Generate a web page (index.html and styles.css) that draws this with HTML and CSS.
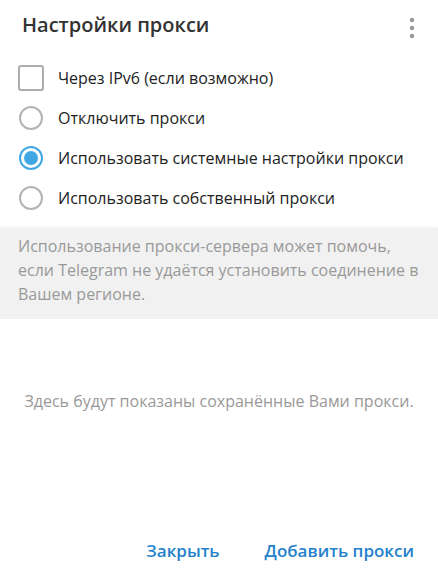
FILE: index.html
```html
<!DOCTYPE html>
<html lang="ru">
<head>
<meta charset="utf-8">
<link rel="stylesheet" href="styles.css">
</head>
<body>
<div class="box">
  <div class="header">
    <div class="title">Настройки прокси</div>
    <div class="menu">
      <svg width="6" height="22" viewBox="0 0 6 22"><circle cx="3" cy="3" r="2.3" fill="#999"/><circle cx="3" cy="11" r="2.3" fill="#999"/><circle cx="3" cy="19" r="2.3" fill="#999"/></svg>
    </div>
  </div>
  <div class="options">
    <div class="row"><span class="check"></span><span class="label">Через IPv6 (если возможно)</span></div>
    <div class="row"><span class="radio"></span><span class="label">Отключить прокси</span></div>
    <div class="row"><span class="radio on"></span><span class="label">Использовать системные настройки прокси</span></div>
    <div class="row"><span class="radio"></span><span class="label">Использовать собственный прокси</span></div>
  </div>
  <div class="about">Использование прокси-сервера может помочь, если Telegram не удаётся установить соединение в Вашем регионе.</div>
  <div class="empty">Здесь будут показаны сохранённые Вами прокси.</div>
  <div class="buttons">
    <span class="btn">Закрыть</span>
    <span class="btn">Добавить прокси</span>
  </div>
</div>
</body>
</html>
```
FILE: styles.css
```css
html, body {
  margin: 0;
  padding: 0;
  background: #fff;
}
body {
  font-family: "Open Sans", "Noto Sans", sans-serif;
  color: #333;
}
.box {
  width: 438px;
  height: 571px;
  display: flex;
  flex-direction: column;
}
.header {
  height: 58px;
  display: flex;
  justify-content: space-between;
  align-items: flex-start;
  padding: 0 23px 0 22px;
}
.title {
  font-size: 20px;
  font-weight: 600;
  line-height: 26px;
  margin-top: 12px;
  color: #333;
}
.menu {
  margin-top: 17px;
  line-height: 0;
}
.options {
  display: flex;
  flex-direction: column;
}
.row {
  height: 40px;
  display: flex;
  align-items: center;
  padding-left: 18px;
}
.label {
  font-size: 16px;
  margin-left: 14px;
  color: #222;
}
.check {
  width: 22px;
  height: 22px;
  border: 2px solid #adadad;
  border-radius: 3px;
  flex: none;
}
.radio {
  width: 20px;
  height: 20px;
  margin: 0 1px;
  border: 2px solid #b3b3b3;
  border-radius: 50%;
  flex: none;
  position: relative;
}
.radio.on {
  border-color: #40a7e3;
}
.radio.on::after {
  content: "";
  position: absolute;
  left: 3px;
  top: 3px;
  width: 14px;
  height: 14px;
  border-radius: 50%;
  background: #40a7e3;
}
.about {
  margin-top: 10px;
  background: #f1f1f1;
  box-shadow: 0 -1px 2px rgba(0,0,0,0.06);
  height: 91px;
  box-sizing: border-box;
  padding: 6px 18px 0;
  font-size: 16px;
  line-height: 24px;
  color: #999;
}
.empty {
  margin-top: 70px;
  text-align: center;
  font-size: 16px;
  line-height: 24px;
  color: #999;
}
.buttons {
  margin-top: auto;
  display: flex;
  justify-content: flex-end;
  gap: 45px;
  padding: 0 24px 8px 0;
}
.btn {
  font-size: 17px;
  font-weight: 600;
  line-height: 24px;
  color: #2481cc;
}
```
